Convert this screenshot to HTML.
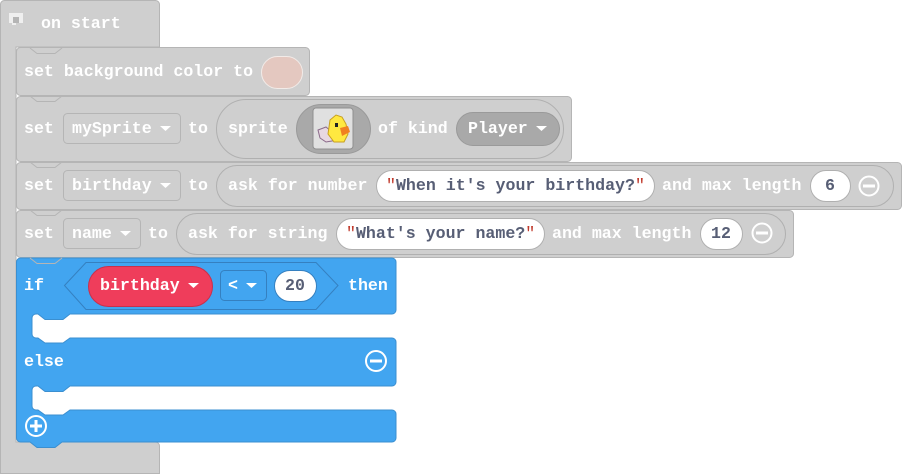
<!DOCTYPE html>
<html><head><meta charset="utf-8"><style>
html,body{margin:0;padding:0;background:#fff;width:902px;height:474px;overflow:hidden}
svg text{font-family:"Liberation Mono",monospace;font-weight:bold;font-size:16.6px;fill:#fff}
</style></head><body>
<svg width="902" height="474" viewBox="0 0 902 474" xmlns="http://www.w3.org/2000/svg">
<path d="M0.5,4 a4,4 0 0 1 4,-3.5 H155.5 a4,4 0 0 1 4,4 V47 H16 V442 H155.5 a4,4 0 0 1 4,4 V473.5 H0.5 Z" fill="#cfcfcf" stroke="#b5b5b5"/>
<rect x="9" y="13" width="14" height="10" fill="#efefef"/><rect x="13" y="17" width="6" height="6" fill="#b5b5b5"/><rect x="12" y="23" width="4" height="2" fill="#efefef"/>
<text x="41" y="28">on start</text>

<rect x="16.5" y="47.5" width="293" height="48" rx="4" fill="#cfcfcf" stroke="#b5b5b5"/>
<path d="M30,48 L37,53.5 H55 L62,48" fill="none" stroke="#b5b5b5"/>
<text x="24" y="76">set background color to</text>
<rect x="261.5" y="56.5" width="41" height="32" rx="16" fill="#e4c8c0" stroke="#f2ebe8"/>

<rect x="16.5" y="96.5" width="555" height="65" rx="4" fill="#cfcfcf" stroke="#b5b5b5"/>
<path d="M30,96 L37,101.5 H55 L62,96" fill="none" stroke="#b5b5b5"/>
<text x="24" y="133">set</text>
<rect x="63.5" y="113.5" width="117" height="30" rx="4" fill="#cfcfcf" stroke="#b5b5b5"/>
<text x="72" y="133">mySprite</text>
<path d="M160,126 h11 l-5.5,5 z" fill="#fff"/>
<text x="188" y="133">to</text>
<rect x="216.5" y="99.5" width="347" height="59" rx="29.5" fill="#cfcfcf" stroke="#b0b0b0"/>
<text x="228" y="133">sprite</text>
<rect x="296.5" y="104.5" width="74" height="49" rx="24.5" fill="#a9a9a9" stroke="#9a9a9a"/>
<rect x="313" y="108" width="40" height="41" rx="3" fill="#e0e0e0" stroke="#8f8f8f"/>
<g>
<path d="M318,130 L326,127 L332,132 L338,140 L326,142 L320,138 Z" fill="#e8d8e0" stroke="#8a6a8a"/>
<path d="M330,120 L336,115 L342,117 L346,124 L348,134 L344,142 L334,142 L328,134 Z" fill="#ffe840" stroke="#c8a020"/>
<path d="M340,128 L348,126 L350,132 L342,136 Z" fill="#f08020"/>
<rect x="335" y="123" width="3" height="4" fill="#222"/>
</g>
<text x="378" y="133">of kind</text>
<rect x="456.5" y="112.5" width="103" height="33" rx="16.5" fill="#a9a9a9" stroke="#9a9a9a"/>
<text x="468" y="133">Player</text>
<path d="M536,126 h11 l-5.5,5 z" fill="#fff"/>

<rect x="16.5" y="162.5" width="885" height="47" rx="4" fill="#cfcfcf" stroke="#b5b5b5"/>
<path d="M30,162 L37,167.5 H55 L62,162" fill="none" stroke="#b5b5b5"/>
<text x="24" y="190">set</text>
<rect x="63.5" y="170.5" width="117" height="30" rx="4" fill="#cfcfcf" stroke="#b5b5b5"/>
<text x="72" y="190">birthday</text>
<path d="M160,183 h11 l-5.5,5 z" fill="#fff"/>
<text x="188" y="190">to</text>
<rect x="216.5" y="165.5" width="677" height="41" rx="20.5" fill="#cfcfcf" stroke="#b0b0b0"/>
<text x="228" y="190">ask for number</text>
<rect x="376.5" y="170.5" width="278" height="31" rx="15.5" fill="#fff" stroke="#b0b0b0"/>
<text x="386" y="190"><tspan fill="#c0392b" font-weight="normal">"</tspan><tspan fill="#575e75">When it's your birthday?</tspan><tspan fill="#c0392b" font-weight="normal">"</tspan></text>
<text x="662" y="190">and max length</text>
<rect x="810.5" y="170.5" width="40" height="31" rx="15.5" fill="#fff" stroke="#b0b0b0"/>
<text x="825" y="190" style="fill:#575e75">6</text>
<circle cx="869" cy="186" r="9.5" fill="none" stroke="#fff" stroke-width="2"/>
<rect x="863" y="184.5" width="12" height="3" fill="#fff"/>

<rect x="16.5" y="210.5" width="777" height="47" rx="4" fill="#cfcfcf" stroke="#b5b5b5"/>
<path d="M30,210 L37,215.5 H55 L62,210" fill="none" stroke="#b5b5b5"/>
<text x="24" y="238">set</text>
<rect x="63.5" y="218.5" width="77" height="30" rx="4" fill="#cfcfcf" stroke="#b5b5b5"/>
<text x="72" y="238">name</text>
<path d="M120,231 h11 l-5.5,5 z" fill="#fff"/>
<text x="148" y="238">to</text>
<rect x="176.5" y="213.5" width="609" height="41" rx="20.5" fill="#cfcfcf" stroke="#b0b0b0"/>
<text x="188" y="238">ask for string</text>
<rect x="336.5" y="218.5" width="208" height="31" rx="15.5" fill="#fff" stroke="#b0b0b0"/>
<text x="346" y="238"><tspan fill="#c0392b" font-weight="normal">"</tspan><tspan fill="#575e75">What's your name?</tspan><tspan fill="#c0392b" font-weight="normal">"</tspan></text>
<text x="552" y="238">and max length</text>
<rect x="700.5" y="218.5" width="42" height="31" rx="15.5" fill="#fff" stroke="#b0b0b0"/>
<text x="711" y="238" style="fill:#575e75">12</text>
<circle cx="762" cy="233" r="9.5" fill="none" stroke="#fff" stroke-width="2"/>
<rect x="756" y="231.5" width="12" height="3" fill="#fff"/>

<path d="M16.5,262 a4,4 0 0 1 4,-4 H392 a4,4 0 0 1 4,4 V310 a4,4 0 0 1 -4,4 H70 L63,319.5 H45 L38,314 H36 a4,4 0 0 0 -4,4 V334 a4,4 0 0 0 4,4 H38 L45,343 H63 L70,338 H392 a4,4 0 0 1 4,4 V382 a4,4 0 0 1 -4,4 H70 L63,391.5 H45 L38,386 H36 a4,4 0 0 0 -4,4 V406 a4,4 0 0 0 4,4 H38 L45,415 H63 L70,410 H392 a4,4 0 0 1 4,4 V438 a4,4 0 0 1 -4,4 H62 L55,447.5 H37 L30,442 H20.5 a4,4 0 0 1 -4,-4 Z" fill="#42a5f0" stroke="#3b8fd0"/>
<path d="M30,258 L37,263.5 H55 L62,258" fill="none" stroke="#b5b5b5"/>
<text x="24" y="290">if</text>
<path d="M64.5,285.5 L86,262.5 H316 L338,285.5 L316,309.5 H86 Z" fill="#42a5f0" stroke="#3580c0"/>
<rect x="88.5" y="266.5" width="124" height="40" rx="20" fill="#ef3d5b" stroke="#c8304c"/>
<text x="100" y="290">birthday</text>
<path d="M188,283 h11 l-5.5,5 z" fill="#fff"/>
<rect x="220.5" y="270.5" width="46" height="30" rx="4" fill="#42a5f0" stroke="#3580c0"/>
<text x="228" y="290">&lt;</text>
<path d="M246,283 h11 l-5.5,5 z" fill="#fff"/>
<rect x="274.5" y="270.5" width="42" height="31" rx="15.5" fill="#fff" stroke="#3580c0"/>
<text x="285" y="290" style="fill:#575e75">20</text>
<text x="348" y="290">then</text>
<text x="24" y="366">else</text>
<circle cx="376" cy="361" r="10" fill="none" stroke="#fff" stroke-width="2"/>
<rect x="370" y="359.5" width="12" height="3" fill="#fff"/>
<circle cx="36" cy="426" r="10" fill="none" stroke="#fff" stroke-width="2"/>
<rect x="30" y="424.5" width="12" height="3" fill="#fff"/>
<rect x="34.5" y="420" width="3" height="12" fill="#fff"/>
</svg>
</body></html>
